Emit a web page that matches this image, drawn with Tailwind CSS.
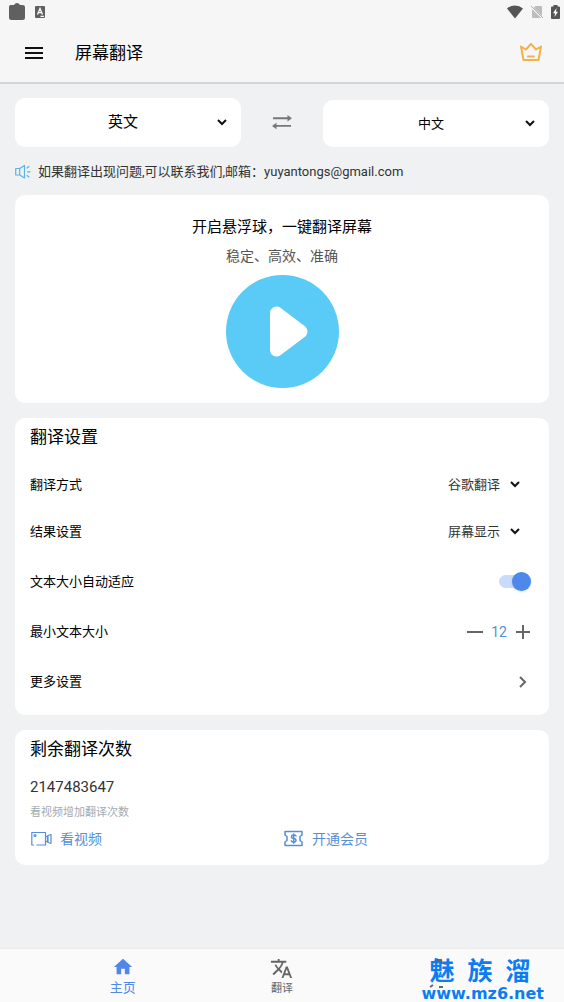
<!DOCTYPE html>
<html lang="zh-CN">
<head>
<meta charset="utf-8">
<meta name="viewport" content="width=device-width, initial-scale=1">
<title>屏幕翻译</title>
<script src="https://cdn.jsdelivr.net/npm/@tailwindcss/browser@4"></script>
</head>
<body class="flex min-h-screen flex-col bg-[#eff1f3] font-[Roboto,'Noto_Sans_CJK_SC',sans-serif] text-[13px] text-black">

<header class="border-b-2 border-[#d3d5d7] bg-[#f6f6f6]">
  <div class="flex h-6 items-center justify-between pl-2 pr-1">
    <div class="flex items-center gap-2">
      <svg class="h-[18px] w-[18px]" viewBox="0 0 18 18" fill="#606060" aria-hidden="true"><path d="M2.500 2H6q1-2 3-2t3 2h2.500Q17 2 17 4v10.500Q17 17 14.500 17h-11Q1 17 1 14.500V4q0-2 1.500-2z"/></svg>
      <svg class="h-3 w-3" viewBox="0 0 12 12" aria-hidden="true"><rect x="1" width="10" height="12" rx="1" fill="#606060"/><path d="M3.500 8.500 6 2.500l2.500 6M4.500 6.700h3M6.500 10.300H10" fill="none" stroke="#fff" stroke-width="1.300"/></svg>
    </div>
    <div class="flex items-center gap-2">
      <svg class="h-[14px] w-4" viewBox="0 0 16 14" fill="#555" aria-hidden="true"><path d="M0 3.500Q3.500.500 8 .500t8 3L8 13.500z"/></svg>
      <svg class="h-[14px] w-3" viewBox="0 0 12 14" aria-hidden="true"><path d="M4.500 1H10q1 0 1 1v10q0 1-1 1H2q-1 0-1-1V4.500z" fill="#bdbdbd"/><path d="M0 1.500 12 13.500" stroke="#f6f6f6" stroke-width="2"/><path d="M0 .800 12 13" stroke="#aaa" stroke-width="1"/></svg>
      <svg class="h-[14px] w-[9px]" viewBox="0 0 9 14" aria-hidden="true"><path d="M2.500 0h4v1.500H8q1 0 1 1V13q0 1-1 1H1q-1 0-1-1V2.500q0-1 1-1h1.500z" fill="#555"/><path d="M5.500 3 2 8.300h2L3.500 12 7 6.700H5z" fill="#fff"/></svg>
    </div>
  </div>
  <div class="flex h-[58px] items-center pl-6 pr-[21px]">
    <button type="button" aria-label="菜单" class="h-5 w-5"><svg class="h-5 w-5" viewBox="0 0 20 20" stroke="#111" stroke-width="2" aria-hidden="true"><path d="M1 5h18M1 10h18M1 15h18"/></svg></button>
    <h1 class="ml-[31px] flex-1 text-[17px] leading-6">屏幕翻译</h1>
    <button type="button" aria-label="会员" class="h-5 w-6"><svg class="h-5 w-6" viewBox="0 0 24 20" fill="none" stroke="#efb34b" stroke-width="2" stroke-linejoin="round" stroke-linecap="round" aria-hidden="true"><path d="M2 3.500 7 6.500 12 .900l5 5.600 5-3L19.500 17H4.500zM9 13.500h6"/></svg></button>
  </div>
</header>

<main class="flex flex-1 flex-col px-[15px] pt-[14px]">
  <div class="grid grid-cols-[1fr_82px_1fr] items-end">
    <div class="relative">
      <select aria-label="源语言" class="block h-[49px] w-full appearance-none rounded-[10px] bg-white pr-[30px] pl-5 text-[15px] [text-align-last:center]"><option>英文</option></select>
      <svg class="pointer-events-none absolute top-[18px] right-[13px] h-3 w-3" viewBox="0 0 12 12" fill="none" stroke="#111" stroke-width="2" aria-hidden="true"><path d="M2 4l4 4 4-4"/></svg>
    </div>
    <button type="button" aria-label="交换语言" class="grid h-[49px] place-items-center"><svg class="h-4 w-5" viewBox="0 0 20 16" fill="#777" aria-hidden="true"><path d="M1 2.300h14.500V0L20 3.200l-4.500 3.200V4.200H1zM19 11.800H4.500v2.400L0 11l4.500-3.200V10H19z"/></svg></button>
    <div class="relative">
      <select aria-label="目标语言" class="block h-[47px] w-full appearance-none rounded-[10px] bg-white pr-[30px] pl-5 text-[13px] [text-align-last:center]"><option>中文</option></select>
      <svg class="pointer-events-none absolute top-[17px] right-[13px] h-3 w-3" viewBox="0 0 12 12" fill="none" stroke="#111" stroke-width="2" aria-hidden="true"><path d="M2 4l4 4 4-4"/></svg>
    </div>
  </div>

  <p class="flex h-12 items-center gap-[7px] pt-px leading-5 text-[#333]">
    <svg class="h-4 w-4 shrink-0" viewBox="0 0 16 16" fill="none" stroke="#5bb5e0" stroke-width="1.200" stroke-linejoin="round" stroke-linecap="round" aria-hidden="true"><path d="M.700 4.500h4v6.500h-4zM4.700 4.500 9.500 1.500v12.500l-4.800-3M12 4l2-1.500M12.500 7.800H15M12 11.500l2 1.500"/></svg>
    <span>如果翻译出现问题,可以联系我们,邮箱：yuyantongs@gmail.com</span>
  </p>

  <section class="flex flex-col items-center rounded-[10px] bg-white pt-5 pb-[15px]">
    <h2 class="text-[15px] leading-6">开启悬浮球，一键翻译屏幕</h2>
    <p class="mt-[5px] text-[14px] leading-6 text-[#555]">稳定、高效、准确</p>
    <button type="button" aria-label="开启悬浮球" class="mt-[7px] h-[113px] w-[113px] rounded-full bg-[#5acaf7]"><svg class="h-[113px] w-[113px]" viewBox="0 0 113 113" aria-hidden="true"><path d="M50.500 38 75 56.500 50.500 75z" fill="#fff" stroke="#fff" stroke-width="13" stroke-linejoin="round"/></svg></button>
  </section>

  <section class="mt-[15px] rounded-[10px] bg-white px-[15px] pb-[7px]">
    <h2 class="mb-[5px] h-[38px] text-[17px] leading-[38px]">翻译设置</h2>
    <div class="flex h-[47px] items-center justify-between">
      <label for="engine">翻译方式</label>
      <div class="relative mr-[9px]">
        <select id="engine" class="block appearance-none bg-transparent pr-6 leading-5 text-[#333]"><option>谷歌翻译</option></select>
        <svg class="pointer-events-none absolute top-[3px] right-1 h-3 w-3" viewBox="0 0 12 12" fill="none" stroke="#111" stroke-width="2" aria-hidden="true"><path d="M2 4l4 4 4-4"/></svg>
      </div>
    </div>
    <div class="flex h-[47px] items-center justify-between">
      <label for="result">结果设置</label>
      <div class="relative mr-[9px]">
        <select id="result" class="block appearance-none bg-transparent pr-6 leading-5 text-[#333]"><option>屏幕显示</option></select>
        <svg class="pointer-events-none absolute top-[3px] right-1 h-3 w-3" viewBox="0 0 12 12" fill="none" stroke="#111" stroke-width="2" aria-hidden="true"><path d="M2 4l4 4 4-4"/></svg>
      </div>
    </div>
    <div class="flex h-[53px] items-center justify-between">
      <label for="autosize">文本大小自动适应</label>
      <input id="autosize" type="checkbox" role="switch" checked class="mr-[3px] flex h-[13px] w-8 appearance-none items-center rounded-full bg-[#c9dbfa] before:h-[19px] before:w-[19px] before:rounded-full before:bg-[#a3a3a3] before:shadow checked:justify-end checked:before:bg-[#4d88ea]">
    </div>
    <div class="flex h-12 items-center justify-between">
      <span>最小文本大小</span>
      <div class="mr-[3px] flex items-center gap-2">
        <button type="button" aria-label="减小"><svg class="h-4 w-4" viewBox="0 0 16 16" stroke="#666" stroke-width="2" aria-hidden="true"><path d="M0 8h16"/></svg></button>
        <output class="text-[14px] leading-5 text-[#568fd5]">12</output>
        <button type="button" aria-label="增大"><svg class="h-4 w-4" viewBox="0 0 16 16" stroke="#666" stroke-width="2" aria-hidden="true"><path d="M1 8h14M8 1v14"/></svg></button>
      </div>
    </div>
    <button type="button" class="flex h-[52px] w-full items-center justify-between pr-[5px]">
      <span>更多设置</span>
      <svg class="h-3 w-3" viewBox="0 0 12 12" fill="none" stroke="#666" stroke-width="2" aria-hidden="true"><path d="M3 1l5 5-5 5"/></svg>
    </button>
  </section>

  <section class="mt-[15px] rounded-[10px] bg-white px-[15px] pb-[14px]">
    <h2 class="h-[38px] text-[17px] leading-[38px]">剩余翻译次数</h2>
    <p class="mt-[7px] text-[15px] leading-6 text-[#333]">2147483647</p>
    <p class="mt-[6px] text-[11px] leading-4 text-[#a3aab3]">看视频增加翻译次数</p>
    <div class="mt-[6px] grid grid-cols-2 text-[14px] leading-6 text-[#568fd5]">
      <button type="button" class="flex items-center gap-2"><svg class="h-4 w-[22px]" viewBox="0 0 22 16" fill="none" stroke="#568fd5" stroke-width="1.200" stroke-linejoin="round" aria-hidden="true"><path d="M4 14H1.800V1.500H15.500V14H6.500M15.500 6 17.500 5v6l-2-1M18 4.500l3-1v9l-3-1z"/><circle cx="5" cy="4.500" r="1"/></svg>看视频</button>
      <button type="button" class="flex items-center gap-2"><svg class="h-[18px] w-[22px]" viewBox="0 0 22 18" fill="none" stroke="#568fd5" stroke-width="1.500" stroke-linejoin="round" stroke-linecap="round" aria-hidden="true"><path d="M3 1.500h17v3.500l-2 1.500v4l2 1.500v3.500H3V12l2-1.500v-4L3 5zM14 6Q13.500 5 11.700 5 9.500 5 9.500 6.700t2.200 1.800 2.300 1.800-2.300 1.700Q9.800 12 9.300 10.900M11.700 4v9"/></svg>开通会员</button>
    </div>
  </section>
</main>

<nav aria-label="主导航" class="relative grid h-[54px] grid-cols-3 border-t border-[#ececec] bg-[#fafafa] px-[43px] text-[#666]">
  <a href="#home" aria-current="page" class="flex flex-col items-center pt-[7px] text-[13px] leading-5 text-[#4f88e8]">
    <svg class="h-[22px] w-[22px]" viewBox="0 0 24 24" fill="currentColor" aria-hidden="true"><path d="M10 20v-6h4v6h5v-8h3L12 3 2 12h3v8z"/></svg>主页</a>
  <a href="#translate" class="flex flex-col items-center pt-2 text-[11px] leading-[18px]">
    <svg class="h-[23px] w-[23px]" viewBox="0 0 24 24" fill="currentColor" aria-hidden="true"><path d="M12.870 15.070l-2.540-2.510.030-.030c1.740-1.940 2.980-4.170 3.710-6.530H17V4h-7V2H8v2H1v1.990h11.170C11.500 7.920 10.440 9.750 9 11.350 8.070 10.320 7.300 9.190 6.690 8h-2c.730 1.630 1.730 3.170 2.980 4.560l-5.090 5.020L4 19l5-5 3.110 3.110.760-2.040zM18.500 10h-2L12 22h2l1.120-3h4.750L21 22h2l-4.500-12zm-2.620 7l1.620-4.330L19.120 17h-3.240z"/></svg>翻译</a>
  <a href="#more" aria-label="更多" class="flex justify-center pt-2">
    <svg class="h-8 w-6" viewBox="0 0 24 32" fill="none" stroke="currentColor" stroke-width="2" aria-hidden="true"><path d="M7 3h5l1 3 5 1M1 30l3-2M10 30h4"/></svg></a>
  <div class="pointer-events-none absolute right-5 bottom-0 flex flex-col font-bold text-[#0b7df2]">
    <div class="flex gap-[13px] pl-2 text-[25px] leading-7"><span>魅</span><span>族</span><span>溜</span></div>
    <div class="font-['DejaVu_Sans'] text-[16px] leading-4">www.mz6.net</div>
  </div>
</nav>
</body>
</html>
